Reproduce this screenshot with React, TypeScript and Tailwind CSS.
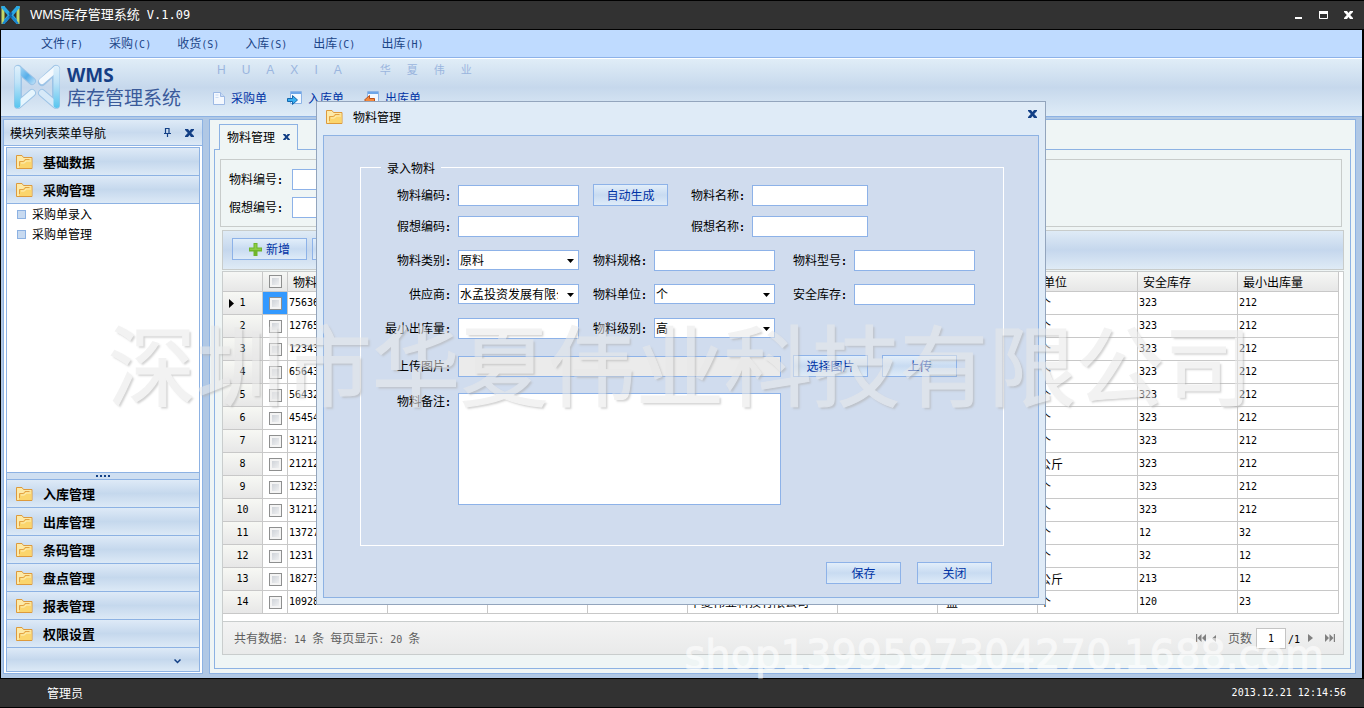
import { useState } from 'react';
import type { ReactNode } from 'react';

type Row = { code: string; unit: string; stock: string; min: string; supplier?: string; pack?: string };

const MENUS = [
  { label: '文件', key: '(F)' },
  { label: '采购', key: '(C)' },
  { label: '收货', key: '(S)' },
  { label: '入库', key: '(S)' },
  { label: '出库', key: '(C)' },
  { label: '出库', key: '(H)' },
];

const MODULES_BOTTOM = ['入库管理', '出库管理', '条码管理', '盘点管理', '报表管理', '权限设置'];

const COLUMNS = ['物料编号', '物料名称', '假想编号', '假想名称', '供应商', '规格', '型号', '单位', '安全库存', '最小出库量'];

const ROWS: Row[] = [
  { code: '756363', unit: '个', stock: '323', min: '212' },
  { code: '127653', unit: '个', stock: '323', min: '212' },
  { code: '123432', unit: '个', stock: '323', min: '212' },
  { code: '656434', unit: '个', stock: '323', min: '212' },
  { code: '564323', unit: '个', stock: '323', min: '212' },
  { code: '454543', unit: '个', stock: '323', min: '212' },
  { code: '312123', unit: '个', stock: '323', min: '212' },
  { code: '212123', unit: '公斤', stock: '323', min: '212' },
  { code: '123232', unit: '个', stock: '323', min: '212' },
  { code: '312123', unit: '个', stock: '323', min: '212' },
  { code: '137273', unit: '个', stock: '12', min: '32' },
  { code: '1231', unit: '个', stock: '32', min: '12' },
  { code: '182733', unit: '公斤', stock: '213', min: '12' },
  { code: '109283', unit: '个', stock: '120', min: '23', supplier: '华夏伟业科技有限公司', pack: '盒' },
];

function FolderIcon() {
  return (
    <svg width="17" height="14" viewBox="0 0 17 14" className="shrink-0">
      <path d="M.5 13.500V.5H6l1.500 2h8.500v11z" fill="#fdeaa8" stroke="#dd9a3c" />
      <path d="M3 13V6.500h4.500l1.500-2H15.500V13z" fill="#fbd56c" />
      <path d="M3.500 11V6.500h4l1.500-2h4.500" fill="none" stroke="#e2a145" />
      <path d="M5 8h3.500l1.500-2H15" fill="none" stroke="#fdf0bc" />
    </svg>
  );
}

function CloseIcon({ small = false, color = '#123f85' }: { small?: boolean; color?: string }) {
  return (
    <svg width={small ? 7 : 9} height={small ? 6 : 8} viewBox="0 0 9 8">
      <path d="M0 0h3l1.500 2L6 0h3v1L6.200 4 9 7v1H6L4.500 6 3 8H0V7l2.800-3L0 1z" fill={color} />
    </svg>
  );
}

function AppIcon() {
  return (
    <svg width="19" height="18" viewBox="0 0 19 18">
      <path d="M2 0v18M17 0v18" stroke="#c3d96a" strokeWidth="3" />
      <path d="M1 0l7 8M18 0l-7 8M4 15l5-6M15 15l-5-6" stroke="#2aa9e6" strokeWidth="3.500" />
      <path d="M2 18l6-7M17 18l-6-7" stroke="#1c86cf" strokeWidth="2.500" />
      <path d="M8 6.500l3 5M11 6.500l-3 5" stroke="#0c5fa8" strokeWidth="1.500" />
    </svg>
  );
}

function Logo() {
  return (
    <svg width="48" height="46" viewBox="0 0 48 46" className="shrink-0">
      <defs>
        <linearGradient id="side" x1="0" y1="0" x2="0" y2="46" gradientUnits="userSpaceOnUse">
          <stop offset="0" stopColor="#e4f2fc" />
          <stop offset=".4" stopColor="#bfe3f8" />
          <stop offset="1" stopColor="#4fc3ee" />
        </linearGradient>
        <linearGradient id="arm" x1="0" y1="0" x2="24" y2="20" gradientUnits="userSpaceOnUse">
          <stop offset="0" stopColor="#d5effc" />
          <stop offset=".6" stopColor="#56aee9" />
          <stop offset="1" stopColor="#cfe9fa" />
        </linearGradient>
      </defs>
      <g fill="none" strokeLinecap="round" strokeLinejoin="round">
        <path d="M5 5v36l14-12M43 5v36l-14-12M43 5L29 18M5 5l14 12" stroke="#9cc3e6" strokeWidth="8" />
        <path d="M5 41l14-12" stroke="#e6f5fd" strokeWidth="6" />
        <path d="M43 41l-14-12" stroke="#d6e9f8" strokeWidth="6" />
        <path d="M5 5l14 12" stroke="url(#arm)" strokeWidth="6" />
        <path d="M43 5L29 17" stroke="#f4f9fd" strokeWidth="6" />
        <path d="M4.500 5v36M43.500 5v36" stroke="url(#side)" strokeWidth="6" />
      </g>
    </svg>
  );
}

function DocIcon() {
  return (
    <svg width="12" height="13" viewBox="0 0 12 13">
      <path d="M.5.5h7l4 4v8H.5z" fill="#f4f8fe" stroke="#9db9e4" />
      <path d="M7.500.5v4h4" fill="#c9dbf3" stroke="#9db9e4" />
      <path d="M2.500 3h3M2.500 5.500h3" stroke="#c9dbf3" />
    </svg>
  );
}

function StockInIcon() {
  return (
    <svg width="15" height="14" viewBox="0 0 15 14">
      <path d="M3.500.5h11v12h-11z" fill="#f2f8ff" stroke="#8db4e6" />
      <path d="M4 1h10v2H4z" fill="#6da6e8" />
      <path d="M.5 7.500h5v-3l5 4.500-5 4.500v-3h-5z" fill="#38b0f2" stroke="#1667ad" />
    </svg>
  );
}

function StockOutIcon() {
  return (
    <svg width="15" height="14" viewBox="0 0 15 14">
      <path d="M3.500.5h11v12h-11z" fill="#f2f8ff" stroke="#8db4e6" />
      <path d="M4 1h10v2H4z" fill="#6da6e8" />
      <path d="M10.500 7.500h-5v-3L.5 9l5 4.500v-3h5z" fill="#f58a3c" stroke="#b9501a" />
    </svg>
  );
}

function Num({ children }: { children: ReactNode }) {
  return <span className="whitespace-pre font-['DejaVu_Sans_Mono',monospace] text-[10px]">{children}</span>;
}

function Colon() {
  return <span className="font-['DejaVu_Sans_Mono',monospace] text-[10px] font-bold">:</span>;
}

function ModuleItem({ name }: { name: string }) {
  return (
    <button
      type="button"
      className="flex h-7 w-full shrink-0 items-center gap-2.5 border-b border-[#8db2e3] bg-linear-to-b from-[#deeaf7] via-[#c5d8ed] to-[#dce9f6] pl-[9px] text-[13px] leading-4 font-bold"
    >
      <FolderIcon />
      {name}
    </button>
  );
}

function Btn({ children, onClick }: { children: ReactNode; onClick?: () => void }) {
  return (
    <button
      type="button"
      onClick={onClick}
      className="flex h-[22px] w-[75px] shrink-0 items-center justify-center gap-1 border border-[#8db2e8] bg-linear-to-b from-[#e2eefa] via-[#c8dbf1] to-[#deebf8] text-xs text-[#0033a5]"
    >
      {children}
    </button>
  );
}

function Field({ id, label, labelClass, children }: { id: string; label: string; labelClass: string; children: ReactNode }) {
  return (
    <div className="flex items-center gap-[7px]">
      <label htmlFor={id} className={`whitespace-nowrap text-right ${labelClass}`}>
        {label}
        <Colon />
      </label>
      {children}
    </div>
  );
}

const INPUT = 'h-[21px] w-[121px] border border-[#8db2e8] bg-white px-1 outline-none';

function Select({ id, value }: { id: string; value: string }) {
  return (
    <div className="relative">
      <select id={id} className="block h-5 w-[121px] appearance-none overflow-hidden border border-[#8db2e8] bg-white pr-5 pl-px leading-4 outline-none">
        <option>{value}</option>
      </select>
      <svg width="7" height="4" viewBox="0 0 7 4" className="pointer-events-none absolute top-[9px] right-[5px]">
        <path d="M0 0h7L3.500 4z" fill="#000" />
      </svg>
    </div>
  );
}

function Check({ label }: { label: string }) {
  return (
    <input
      type="checkbox"
      aria-label={label}
      className="mx-auto block size-[13px] appearance-none border border-[#8e8f8f] bg-linear-to-br from-[#c6cbd2] to-[#f8f8f8] shadow-[inset_0_0_0_2px_#f4f4f4] checked:bg-[#3399ff]"
    />
  );
}

function MaterialDialog({ onClose }: { onClose: () => void }) {
  return (
    <div className="absolute inset-0 flex items-center justify-center pr-0.5 pb-0.5">
      <div
        role="dialog"
        aria-label="物料管理"
        className="flex h-[504px] w-[730px] flex-col border border-[#93a5bd] bg-[#dfebf7] px-1.5 pb-1.5"
      >
        <div className="flex h-[33px] shrink-0 items-center justify-between pr-0.5 pb-1 pl-[3px]">
          <div className="flex items-center gap-2.5">
            <FolderIcon />
            <span>物料管理</span>
          </div>
          <button type="button" aria-label="关闭窗口" onClick={onClose} className="mb-1.5">
            <CloseIcon />
          </button>
        </div>
        <form className="flex flex-1 flex-col border border-[#8db2e3] bg-[#d0dcee] pt-[23px] pr-[34px] pl-9">
          <fieldset className="h-[387px] border border-white">
            <legend className="ml-5 px-[6px] leading-[17px]">录入物料</legend>
            <div className="mt-2 flex h-[22px] items-center">
              <Field id="code" label="物料编码" labelClass="w-[90px]">
                <input id="code" className={INPUT} />
              </Field>
              <div className="ml-3.5">
                <Btn>自动生成</Btn>
              </div>
              <Field id="name" label="物料名称" labelClass="w-[77px]">
                <input id="name" className="h-[21px] w-[116px] border border-[#8db2e8] bg-white px-1 outline-none" />
              </Field>
            </div>
            <div className="mt-[9px] flex h-[22px] items-center">
              <Field id="vcode" label="假想编码" labelClass="w-[90px]">
                <input id="vcode" className={INPUT} />
              </Field>
              <Field id="vname" label="假想名称" labelClass="w-[166px]">
                <input id="vname" className="h-[21px] w-[116px] border border-[#8db2e8] bg-white px-1 outline-none" />
              </Field>
            </div>
            <div className="mt-3 flex h-[22px] items-center">
              <Field id="kind" label="物料类别" labelClass="w-[90px]">
                <Select id="kind" value="原料" />
              </Field>
              <Field id="spec" label="物料规格" labelClass="w-[68px]">
                <input id="spec" className={INPUT} />
              </Field>
              <Field id="model" label="物料型号" labelClass="w-[72px]">
                <input id="model" className={INPUT} />
              </Field>
            </div>
            <div className="mt-3 flex h-[22px] items-center">
              <Field id="supplier" label="供应商" labelClass="w-[90px]">
                <Select id="supplier" value="水孟投资发展有限公司" />
              </Field>
              <Field id="unit" label="物料单位" labelClass="w-[68px]">
                <Select id="unit" value="个" />
              </Field>
              <Field id="safe" label="安全库存" labelClass="w-[72px]">
                <input id="safe" className={INPUT} />
              </Field>
            </div>
            <div className="mt-3 flex h-[22px] items-center">
              <Field id="minout" label="最小出库量" labelClass="w-[90px]">
                <input id="minout" className={INPUT} />
              </Field>
              <Field id="level" label="物料级别" labelClass="w-[68px]">
                <Select id="level" value="高" />
              </Field>
            </div>
            <div className="mt-4 flex h-[22px] items-center">
              <Field id="picture" label="上传图片" labelClass="w-[90px]">
                <input id="picture" readOnly className="h-[21px] w-[323px] border border-[#8db2e8] bg-[#ebebeb] px-1 outline-none" />
              </Field>
              <div className="ml-3 flex gap-3.5">
                <Btn>选择图片</Btn>
                <Btn>上传</Btn>
              </div>
            </div>
            <div className="mt-4 flex items-start gap-[7px]">
              <label htmlFor="remark" className="w-[90px] text-right">
                物料备注
                <Colon />
              </label>
              <textarea id="remark" className="h-[112px] w-[323px] resize-none border border-[#8db2e8] bg-white outline-none" />
            </div>
          </fieldset>
          <div className="mt-4 flex justify-end gap-4 pr-3">
            <Btn>保存</Btn>
            <Btn onClick={onClose}>关闭</Btn>
          </div>
        </form>
      </div>
    </div>
  );
}

function Sidebar() {
  return (
    <aside className="flex w-[200px] shrink-0 flex-col border border-[#8db2e3] bg-white">
      <div className="flex h-[26px] shrink-0 items-center justify-between border-b border-[#8db2e3] bg-linear-to-b from-[#dfebf7] via-[#c8daee] to-[#dce9f6] pr-2 pl-1.5">
        <span>模块列表菜单导航</span>
        <div className="flex items-center gap-[14px]">
          <button type="button" aria-label="固定">
            <svg width="7" height="9" viewBox="0 0 7 9">
              <path d="M1.500 0v5M2 .5h3M5 0v5M0 5.500h7M3.500 6v3" fill="none" stroke="#123f85" strokeWidth="1.200" />
            </svg>
          </button>
          <button type="button" aria-label="关闭导航">
            <CloseIcon />
          </button>
        </div>
      </div>
      <nav className="mx-0.5 my-px flex flex-1 flex-col border border-[#8db2e3]">
        <ModuleItem name="基础数据" />
        <ModuleItem name="采购管理" />
        <ul className="flex-1">
          {['采购单录入', '采购单管理'].map((t) => (
            <li key={t} className="flex h-5 items-center gap-1.5 pl-2.5">
              <span className="size-[9px] border border-[#8db2e3] bg-[#c8daf0]" />
              <a href="#">{t}</a>
            </li>
          ))}
        </ul>
        <div className="flex h-2 items-center justify-center gap-0.5 border-y border-[#8db2e3] bg-[#cfdff1]">
          {[0, 1, 2, 3].map((i) => (
            <span key={i} className="size-0.5 bg-[#123f85]" />
          ))}
        </div>
        {MODULES_BOTTOM.map((m) => (
          <ModuleItem key={m} name={m} />
        ))}
        <button
          type="button"
          aria-label="更多"
          className="flex h-[23px] shrink-0 items-center justify-end bg-linear-to-b from-[#deeaf7] via-[#c5d8ed] to-[#dce9f6] pt-1 pr-[18px]"
        >
          <svg width="7" height="5" viewBox="0 0 7 5">
            <path d="M.5.5l3 3 3-3" fill="none" stroke="#123f85" strokeWidth="1.500" />
          </svg>
        </button>
      </nav>
    </aside>
  );
}

function MaterialTable() {
  return (
    <div className="mt-px flex flex-1 flex-col border border-[#c9cdcd] bg-white">
      <div className="flex-1 pr-1">
        <table className="w-full table-fixed border-separate border-spacing-0">
          <colgroup>
            <col className="w-10" />
            <col className="w-[25px]" />
            <col className="w-[100px]" />
            <col className="w-[100px]" />
            <col className="w-[100px]" />
            <col className="w-[100px]" />
            <col className="w-[150px]" />
            <col className="w-[100px]" />
            <col className="w-[100px]" />
            <col className="w-[100px]" />
            <col className="w-[100px]" />
            <col />
          </colgroup>
          <thead>
            <tr className="h-5 bg-linear-to-b from-[#f6f7f5] to-[#e6e6e6]">
              <th className="border-r border-b border-[#c8c8c8]" />
              <th className="border-r border-b border-[#c8c8c8] p-0">
                <Check label="全选" />
              </th>
              {COLUMNS.map((c) => (
                <th key={c} className="border-r border-b border-[#c8c8c8] p-0 pl-[5px] text-left leading-4 font-normal">
                  {c}
                </th>
              ))}
            </tr>
          </thead>
          <tbody>
            {ROWS.map((r, i) => (
              <tr key={i} className="h-[23px]">
                <td className="border-r border-b border-[#c8c8c8] bg-linear-to-b from-[#f7f8f4] to-[#e7e7e7] p-0">
                  <div className="relative text-center font-['DejaVu_Sans_Mono',monospace] text-[10px] leading-4">
                    {i === 0 && (
                      <svg width="5" height="9" viewBox="0 0 5 9" className="absolute top-1 left-1.5">
                        <path d="M0 0l5 4.500L0 9z" fill="#000" />
                      </svg>
                    )}
                    {i + 1}
                  </div>
                </td>
                <td className={`border-r border-b border-[#c8c8c8] p-0 ${i === 0 ? 'bg-[#3399ff]' : ''}`}>
                  <Check label={`选择第${i + 1}行`} />
                </td>
                {[r.code, '', '', '', r.supplier ?? '', '', r.pack ?? '', r.unit, r.stock, r.min].map((v, j) => (
                  <td
                    key={j}
                    className={`overflow-hidden border-r border-b border-[#c8c8c8] p-0 leading-4 whitespace-nowrap ${j === 6 ? 'pl-2' : 'pl-px'} ${/\d/.test(v) ? "font-['DejaVu_Sans_Mono',monospace] text-[10px]" : ''}`}
                  >
                    {v}
                  </td>
                ))}
              </tr>
            ))}
          </tbody>
        </table>
      </div>
      <div className="flex h-[33px] shrink-0 items-center justify-between border-t border-[#c9cdcd] bg-linear-to-b from-[#f3f3f3] to-[#e9eaea] pr-2 pl-[11px] text-[#5f5f5f]">
        <div>
          共有数据<Num>: 14 </Num>条<Num> </Num>每页显示<Num>: 20 </Num>条
        </div>
        <div className="flex items-center">
          <button type="button" aria-label="首页">
            <svg width="10" height="8" viewBox="0 0 10 8">
              <path d="M0 0h1.200v8H0zM5.500 0v8L1.500 4zM10 0v8L6 4z" fill="#808080" />
            </svg>
          </button>
          <button type="button" aria-label="上一页" className="ml-1.5">
            <svg width="4" height="7" viewBox="0 0 4 7">
              <path d="M4 0v7L0 3.500z" fill="#808080" />
            </svg>
          </button>
          <label htmlFor="page" className="ml-3">
            页数
          </label>
          <input
            id="page"
            defaultValue="1"
            className="ml-1 h-[21px] w-[30px] border border-[#c4c4c4] bg-white text-center font-['DejaVu_Sans_Mono',monospace] text-[10px] text-black outline-none"
          />
          <span className="ml-0.5 text-black">
            <Num>/1</Num>
          </span>
          <button type="button" aria-label="下一页" className="ml-2">
            <svg width="5" height="8" viewBox="0 0 5 8">
              <path d="M0 0v8l5-4z" fill="#808080" />
            </svg>
          </button>
          <button type="button" aria-label="末页" className="ml-3">
            <svg width="10" height="8" viewBox="0 0 10 8">
              <path d="M8.800 0H10v8H8.800zM4.500 0v8l4-4zM0 0v8l4-4z" fill="#808080" />
            </svg>
          </button>
        </div>
      </div>
    </div>
  );
}

export default function App() {
  const [open, setOpen] = useState(true);

  return (
    <div className="relative flex min-h-screen flex-col overflow-hidden bg-[#323232] font-['Noto_Sans_CJK_SC',sans-serif] text-xs text-black">
      <header className="flex h-[30px] shrink-0 items-center justify-between border-y border-black pr-[11px] pl-px text-white">
        <div className="flex items-center gap-2.5">
          <AppIcon />
          <span className="flex items-baseline gap-[7px] font-['Liberation_Sans','Noto_Sans_CJK_SC',sans-serif] text-[13px]">
            WMS库存管理系统
            <span className="font-['DejaVu_Sans_Mono',monospace] text-xs">V.1.09</span>
          </span>
        </div>
        <div className="flex items-center gap-4">
          <button type="button" aria-label="最小化">
            <svg width="8" height="8" viewBox="0 0 8 8">
              <path d="M0 6h7v2H0z" fill="#fff" />
            </svg>
          </button>
          <button type="button" aria-label="最大化">
            <svg width="9" height="8" viewBox="0 0 9 8">
              <path d="M.5 1v6.500h8V1" fill="none" stroke="#fff" />
              <path d="M0 0h9v3H0z" fill="#fff" />
            </svg>
          </button>
          <button type="button" aria-label="退出">
            <CloseIcon color="#fff" />
          </button>
        </div>
      </header>

      <div className="flex flex-1 flex-col border-r-2 border-b border-l border-black bg-[#b0c8e5]">
        <nav className="flex h-7 shrink-0 items-center gap-[26px] border-b border-[#8db2e8] bg-[#bfdbff] pl-10 text-[#1c4587]">
          {MENUS.map((m, i) => (
            <a key={i} href="#">
              {m.label}
              <Num>{m.key}</Num>
            </a>
          ))}
        </nav>
        <div className="flex h-[59px] shrink-0 border-t border-b border-t-white border-b-[#8db2e3] bg-linear-to-b from-[#e0edf7] via-[#c6d8ec] to-[#dfecf7] pl-3">
          <div className="flex w-[204px] items-center gap-[6px] pb-0.5">
            <Logo />
            <div className="text-[#3a5a9a]">
              <div className="font-['Open_Sans',sans-serif] text-[19px] leading-5 font-bold text-[#153e84]">WMS</div>
              <div className="text-[19px] leading-6">库存管理系统</div>
            </div>
          </div>
          <div className="flex flex-col gap-3 pt-[3px]">
            <div className="flex gap-4 font-['Liberation_Sans','Noto_Sans_CJK_SC',sans-serif] leading-4 text-[#9ab5de]">
              {'HUAXIA'.split('').map((c, i) => (
                <span key={i}>{c}</span>
              ))}
              <div className="ml-[22px] flex gap-4 text-[11px]">
                {'华夏伟业'.split('').map((c) => (
                  <span key={c}>{c}</span>
                ))}
              </div>
            </div>
            <div className="-ml-1 flex gap-5 leading-4 text-[#0033a5]">
              <a href="#" className="flex items-center gap-1.5">
                <DocIcon />
                采购单
              </a>
              <a href="#" className="flex items-center gap-1.5">
                <StockInIcon />
                入库单
              </a>
              <a href="#" className="flex items-center gap-1.5">
                <StockOutIcon />
                出库单
              </a>
            </div>
          </div>
        </div>

        <div className="flex flex-1 gap-1.5 pt-0.5 pr-1.5 pb-1 pl-0.5">
          <Sidebar />
          <main className="flex min-w-0 flex-1 flex-col border border-[#8db2e3] bg-[#eff5f5] px-1 pt-1 pb-1">
            <div className="ml-[5px] flex">
              <div className="relative -mb-px flex h-[26px] items-center gap-2 border border-b-0 border-[#8db2e3] bg-[#eff5f5] px-[7px] pb-0.5">
                <span>物料管理</span>
                <button type="button" aria-label="关闭标签">
                  <CloseIcon small />
                </button>
              </div>
            </div>
            <div className="flex flex-1 flex-col border border-[#8db2e3] pt-[9px] pr-1.5 pb-[13px] pl-[5px]">
              <div className="mr-0.5 flex h-[68px] flex-col justify-center gap-[7px] border border-[#c8cccb] pl-2">
                <div className="flex items-center gap-2">
                  <label htmlFor="q1" className="w-[55px] whitespace-nowrap">
                    物料编号
                    <Colon />
                  </label>
                  <input id="q1" className={INPUT} />
                </div>
                <div className="flex items-center gap-2">
                  <label htmlFor="q2" className="w-[55px] whitespace-nowrap">
                    假想编号
                    <Colon />
                  </label>
                  <input id="q2" className={INPUT} />
                </div>
              </div>
              <div className="mt-[3px] ml-0.5 flex flex-1 flex-col">
                <div className="flex h-10 shrink-0 items-center gap-[5px] border border-[#c8cccb] bg-linear-to-b from-[#dfebf6] via-[#c5d7ed] to-[#dfebf6] pb-0.5 pl-[9px]">
                  <Btn>
                    <svg width="13" height="13" viewBox="0 0 13 13">
                      <path d="M4.500 0h4v4.500H13v4H8.500V13h-4V8.500H0v-4h4.500z" fill="#6fb52c" />
                      <path d="M5.500 1h2v4.500H12v1.500H1V5.500h4.500z" fill="#8ccc45" />
                    </svg>
                    新增
                  </Btn>
                  <Btn>修改</Btn>
                </div>
                <MaterialTable />
              </div>
            </div>
          </main>
        </div>
      </div>

      <footer className="flex h-[29px] shrink-0 items-center justify-between border-b border-black pr-[18px] pl-[47px] text-white">
        <span>管理员</span>
        <Num>2013.12.21 12:14:56</Num>
      </footer>

      {open && <MaterialDialog onClose={() => setOpen(false)} />}

      <div
        aria-hidden="true"
        className="pointer-events-none absolute inset-x-0 top-[317px] pr-1 text-center text-[88px] leading-[88px] whitespace-nowrap text-[#e9e9e9] opacity-55 [-webkit-text-stroke:1px_#e9e9e9] [text-shadow:2px_2px_2px_#b0b0b0]"
      >
        深圳市华夏伟业科技有限公司
      </div>
      <div
        aria-hidden="true"
        className="pointer-events-none absolute right-10 bottom-7 font-['DejaVu_Sans',sans-serif] text-[40px] leading-[50px] whitespace-nowrap text-white opacity-60 [-webkit-text-stroke:1px_#ffffff]"
      >
        shop1399597304270.1688.com
      </div>
    </div>
  );
}
